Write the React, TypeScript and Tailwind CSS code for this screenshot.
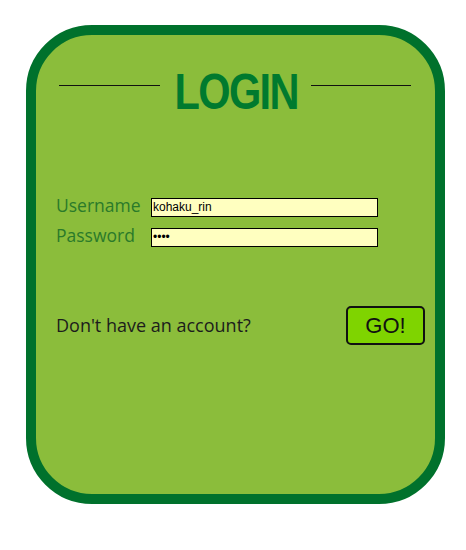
import type React from "react";

const App: React.FC = () => (
  <div className="min-h-[550px] bg-white pt-[25px] pl-[26px]">
    <div className="w-[419px] h-[479px] rounded-[66px] border-[10px] border-[#00712c] bg-[#8bbd3b] flex flex-col">
      {/* Header */}
      <div className="flex items-center justify-between pt-[32px] pl-[23px] pr-[24px]">
        <div className="w-[103px] h-px mb-[14px] bg-[#111]" />
        <h1 className="ml-[2px] scale-x-[0.83] font-['Liberation_Sans',sans-serif] font-bold text-[50px] leading-[50px] tracking-[-2px] text-[#007a2e]">
          LOGIN
        </h1>
        <div className="w-[102px] h-px mb-[14px] bg-[#111]" />
      </div>

      {/* Form */}
      <div className="mt-[78px] pl-[20px] flex flex-col gap-[6px] font-['Open_Sans',sans-serif]">
        <div className="flex items-center h-[24px]">
          <label className="w-[95px] mb-[4px] text-[17.5px] text-[#2a7a2a]">Username</label>
          <input
            readOnly
            value="kohaku_rin"
            className="w-[227px] h-[19px] border border-black bg-[#ffffc0] px-[1px] text-[12px] font-['Liberation_Sans',sans-serif] text-black outline-none"
          />
        </div>
        <div className="flex items-center h-[24px]">
          <label className="w-[95px] mb-[4px] text-[17.5px] text-[#2a7a2a]">Password</label>
          <input
            readOnly
            type="password"
            value="rinn"
            className="w-[227px] h-[19px] border border-black bg-[#ffffc0] px-[1px] text-[12px] font-['Liberation_Sans',sans-serif] text-black outline-none"
          />
        </div>
      </div>

      {/* Footer */}
      <div className="mt-[57px] flex items-center justify-between pl-[20px] pr-[10px]">
        <span className="font-['Open_Sans',sans-serif] text-[18px] text-[#1c1c1c]">
          Don't have an account?
        </span>
        <button className="w-[79px] h-[39px] rounded-[5px] border-2 border-[#111] bg-[#7fd400] font-['Liberation_Sans',sans-serif] text-[22px] text-[#111]">
          GO!
        </button>
      </div>
    </div>
  </div>
);

export default App;
